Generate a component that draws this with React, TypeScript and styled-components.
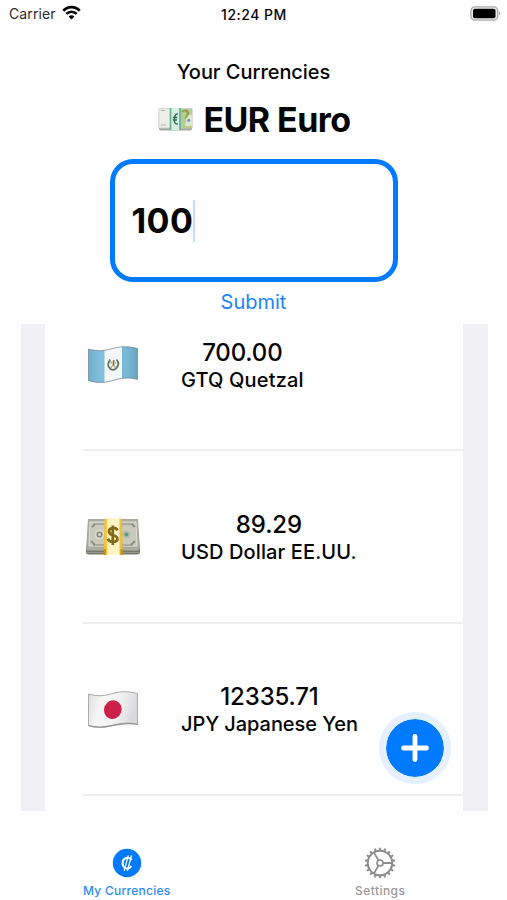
import React from "react";
import styled, { createGlobalStyle } from "styled-components";

const GlobalStyle = createGlobalStyle`
  * { box-sizing: border-box; }
  body { margin: 0; background: #fff; }
`;

const BLUE = "#007aff";

const Screen = styled.div`
  width: 507px;
  height: 900px;
  display: flex;
  flex-direction: column;
  align-items: center;
  overflow: hidden;
  background: #fefefe;
  color: #050505;
  font-family: Inter, "Liberation Sans", sans-serif;
  white-space: nowrap;
`;

const StatusBar = styled.div`
  width: 100%;
  height: 28px;
  padding: 0 6px 0 9px;
  display: grid;
  grid-template-columns: 1fr auto 1fr;
  align-items: center;
`;

const Carrier = styled.div`
  display: flex;
  align-items: center;
  gap: 6px;
  font-size: 14px;
  letter-spacing: 0.1px;
  line-height: 28px;
  color: #2a2a2a;
  svg { margin-top: -3px; }
`;

const Clock = styled.div`
  margin-right: 2px;
  font-size: 14px;
  font-weight: 550;
  letter-spacing: 0.5px;
`;

const BatterySlot = styled.div`
  display: flex;
  justify-content: flex-end;
  margin-top: -2px;
`;

const Title = styled.h1`
  margin: 30px 0 0;
  height: 28px;
  line-height: 28px;
  font-size: 20px;
  font-weight: 550;
  letter-spacing: -0.05px;
`;

const Base = styled.div`
  display: flex;
  align-items: center;
  gap: 10px;
  margin: 12px 0 0 2px;
  height: 42px;
  font-size: 34px;
  font-weight: 700;
  letter-spacing: -0.55px;
`;

const AmountField = styled.div`
  width: 288px;
  height: 123px;
  margin: 19px 0 0 0;
  padding: 0 17px;
  display: flex;
  align-items: center;
  border: 5px solid ${BLUE};
  border-radius: 23px;
  font-size: 34px;
  font-weight: 700;
  letter-spacing: 0.4px;
`;

const Caret = styled.span`
  width: 2px;
  height: 42px;
  background: #c4dcf8;
`;

const Submit = styled.button`
  margin: 5px 0 0;
  padding: 0;
  height: 30px;
  border: 0;
  background: none;
  color: #1c86f5;
  font: 400 20px/30px Inter, sans-serif;
`;

const List = styled.div`
  position: relative;
  width: 467px;
  height: 487px;
  margin: 7px 0 0 2px;
  padding-left: 38px;
  border: solid #f0f0f5;
  border-width: 0 25px 0 24px;
  overflow: hidden;
`;

const Rows = styled.div`
  margin-top: -45px;
`;

const Row = styled.div`
  height: 172.3px;
  padding-top: 2px;
  display: flex;
  align-items: center;
  border-bottom: 2px solid #eeeeef;
`;

const FlagSlot = styled.div`
  width: 98px;
  height: 44px;
  flex: none;
`;

const Details = styled.div`
  display: flex;
  flex-direction: column;
  align-items: center;
`;

const Value = styled.div`
  height: 29px;
  line-height: 29px;
  font-size: 24px;
  font-weight: 550;
  letter-spacing: -0.15px;
`;

const Name = styled.div<{ $tracking: number }>`
  height: 26px;
  line-height: 26px;
  font-size: 20px;
  font-weight: 550;
  letter-spacing: ${(p) => p.$tracking}px;
`;

const AddButton = styled.button`
  position: absolute;
  right: 12px;
  bottom: 27px;
  width: 72px;
  height: 72px;
  padding: 0;
  border: 7px solid #e4f0fd;
  border-radius: 50%;
  background: ${BLUE};
  background-clip: padding-box;
  display: grid;
  place-items: center;
`;

const TabBar = styled.nav`
  width: 100%;
  flex: 1;
  display: grid;
  grid-template-columns: 1fr 1fr;
  padding-top: 36px;
`;

const Tab = styled.div<{ $active?: boolean }>`
  display: flex;
  flex-direction: column;
  align-items: center;
  color: ${(p) => (p.$active ? "#2c8df5" : "#999")};
  font-size: 12px;
  line-height: 16px;
  font-weight: 500;
  letter-spacing: ${(p) => (p.$active ? 0.25 : 0.45)}px;
`;

const TabIcon = styled.span`
  height: 36px;
  display: flex;
  align-items: center;
  padding-bottom: 4px;
`;

const Wifi = () => (
  <svg width="19" height="15" viewBox="0 0 19 15" fill="none" stroke="#050505" strokeWidth="2.7">
    <path d="M1.3 5.7C6 0.8 13 0.8 17.7 5.7" />
    <path d="M4.3 8.9C7.3 6 11.7 6 14.7 8.9" />
    <path d="M9.5 14.5L6.6 11.4Q9.5 9 12.4 11.4Z" fill="#050505" stroke="none" />
  </svg>
);

const Battery = () => (
  <svg width="31" height="15" viewBox="0 0 31 15">
    <rect x="0.9" y="0.9" width="26.8" height="13.2" rx="4" fill="#eee" stroke="#aaa" strokeWidth="1.3" />
    <rect x="3" y="2.8" width="22.5" height="9.4" rx="1.8" fill="#000" />
    <path d="M29 5.4Q31.5 7.5 29 9.6Z" fill="#aaa" />
  </svg>
);

const EuroNotes = () => (
  <svg width="35" height="24" viewBox="0 0 35 24">
    <path d="M1 19H34V22Q34 23.5 32 23.5H3Q1 23.5 1 22Z" fill="#a7aaa5" />
    <rect x="0.8" y="1.5" width="33.4" height="19.5" rx="1" fill="#eceee9" stroke="#c8cac5" strokeWidth="0.8" />
    <path d="M2.5 3.5H7M3 18H8" stroke="#b2b5b0" strokeWidth="1" />
    <path d="M21 2H34V21H21Z" fill="#b9cb8f" />
    <path d="M29 8H34V19H27Z" fill="#dde7cb" />
    <path d="M24 5Q27 2 29 5T27 11M28 3Q31 5 30 8" fill="none" stroke="#8a9c46" strokeWidth="1.6" />
    <circle cx="30.8" cy="13.3" r="1.5" fill="#6c94c8" />
    <path d="M12 1H22V23H12Z" fill="#d9eee2" />
    <path d="M12.5 1V23M22 1V23" stroke="#64b894" strokeWidth="1.8" />
    <path d="M20 7.2Q16.8 6 16.4 12T20 16.7M14.8 10.5H19.3M14.8 13H19" fill="none" stroke="#366b53" strokeWidth="1.4" />
  </svg>
);

const FLAG = "M5.5 6C16 9 22 7.5 30 5.4S45 3 54.5 5.5V36.5C45 34 38 35 30 37.4S14 40.5 5.5 37.5Z";

const GuatemalaFlag = () => (
  <svg width="60" height="44" viewBox="0 0 60 44">
    <defs>
      <clipPath id="gtFlag"><path d={FLAG} /></clipPath>
      <linearGradient id="gtBlue" x1="0" x2="1">
        <stop offset="0" stopColor="#68a9c8" />
        <stop offset=".3" stopColor="#82bfdc" />
        <stop offset=".75" stopColor="#77b8d6" />
        <stop offset="1" stopColor="#6298b2" />
      </linearGradient>
    </defs>
    <g clipPath="url(#gtFlag)">
      <path d="M0 0H60V44H0Z" fill="url(#gtBlue)" />
      <path d="M21.5 0H39V44H21.5Z" fill="#f6f7f9" />
    </g>
    <path d={FLAG} fill="none" stroke="#65727a" strokeOpacity=".6" strokeWidth="1" />
    <path d="M27.2 16.5Q23 22 27.5 26Q30 28 33 25.5Q37.5 21 33.5 16.5" fill="none" stroke="#58745c" strokeWidth="1.7" />
    <path d="M27 18L33 25M33 19L27.5 25" stroke="#b5a884" strokeWidth="1.4" />
    <path d="M29 18Q31 15 32 18L31 22H29Z" fill="#ddd5ae" />
    <path d="M30.8 17L30.3 22" stroke="#496c47" strokeWidth="1" />
  </svg>
);

const JapanFlag = () => (
  <svg width="60" height="44" viewBox="0 0 60 44">
    <defs>
      <linearGradient id="jpWhite" x1="0" x2="1" y2=".2">
        <stop offset="0" stopColor="#dcdcde" />
        <stop offset=".3" stopColor="#f6f6f7" />
        <stop offset=".65" stopColor="#f3f3f4" />
        <stop offset="1" stopColor="#dadadc" />
      </linearGradient>
    </defs>
    <path d={FLAG} fill="url(#jpWhite)" stroke="#aaa" strokeWidth="1" />
    <path d="M5.5 37.5Q15 40.5 30 37.4T54.5 36.5" fill="none" stroke="#929294" strokeWidth="1.2" />
    <ellipse cx="29.8" cy="21.6" rx="8.8" ry="9.5" transform="rotate(20 29.8 21.6)" fill="#cc2049" />
  </svg>
);

const DollarNotes = () => (
  <svg width="60" height="44" viewBox="0 0 60 44">
    <defs>
      <linearGradient id="usBand" x1="0" x2="1">
        <stop offset="0" stopColor="#f4bb26" />
        <stop offset=".16" stopColor="#f9ca3e" />
        <stop offset=".2" stopColor="#fff3bf" />
        <stop offset=".8" stopColor="#fff5ce" />
        <stop offset=".86" stopColor="#f5c43a" />
        <stop offset="1" stopColor="#eab522" />
      </linearGradient>
    </defs>
    <path d="M3 30H57V37Q57 39.5 54 39.5H6Q3 39.5 3 37Z" fill="#77796f" />
    <path d="M3.5 35.5H56M3.5 37.5H56" stroke="#a4a69c" strokeWidth=".7" />
    <path d="M5 4H55L57 33Q57 35 55 35H5Q3 35 3 33Z" fill="#a9ac9f" />
    <path d="M7 7H53L54 31H6Z" fill="#c9cabd" stroke="#e0e0d5" strokeWidth="1" />
    <path d="M11 9H21M39 9H49M10 30H21M39 30H50" stroke="#85897d" strokeWidth="1" />
    <path d="M9 12L12 9M49 9L52 12M8 26L12 30M48 30L52 26" stroke="#8b8e81" strokeWidth="2" />
    <circle cx="16.5" cy="19.5" r="5" fill="#dad9cd" />
    <circle cx="16.5" cy="19.5" r="2.3" fill="none" stroke="#7e8278" strokeWidth="1.5" />
    <circle cx="43.5" cy="19.5" r="4" fill="#b5beac" />
    <circle cx="43.5" cy="19.5" r="2" fill="#5d9c7d" />
    <path d="M21.5 4Q30 2 39 4L39.5 38Q39 40 37 40H23Q21 40 21 38Z" fill="url(#usBand)" />
    <path d="M22 34V40M38.5 34V40" stroke="#c58d12" strokeWidth="1.8" />
    <path d="M34.5 15.5Q33 12.5 29.7 13C24.5 13.8 25 19 30 20.2C36 21.7 36 26.7 30 27Q26 27 24.8 23.8M29.8 10.5V30" fill="none" stroke="#806a18" strokeWidth="2.7" />
  </svg>
);

const Plus = () => (
  <svg width="30" height="30" viewBox="0 0 30 30" stroke="#fff" strokeWidth="4.8" strokeLinecap="round">
    <path d="M15 3.5V26.5M3.5 15H26.5" />
  </svg>
);

const ColonCoin = () => (
  <svg width="30" height="30" viewBox="0 0 30 30">
    <circle cx="15" cy="15" r="14.2" fill={BLUE} />
    <path d="M19.7 12Q18.3 9.6 15.4 9.8C11.5 10 10.4 13 10.6 15.7C10.8 19.2 13.1 20.9 15.8 20.4Q18.2 20 19.3 18" fill="none" stroke="#fff" strokeWidth="2.1" />
    <path d="M16.3 7.3L12.2 22.8M19.5 7.3L15.4 22.8" stroke="#fff" strokeWidth="1.3" />
  </svg>
);

const teeth = Array.from({ length: 18 }, (_, i) => i * 20);

const Gear = () => (
  <svg width="32" height="32" viewBox="0 0 32 32" fill="none" stroke="#8d8d8f">
    <circle cx="16" cy="16" r="12.2" strokeWidth="2" />
    {teeth.map((a) => (
      <path key={a} d="M14.9 3.6L15.3 0.9H16.7L17.1 3.6Z" transform={`rotate(${a} 16 16)`} fill="#8d8d8f" strokeWidth=".4" />
    ))}
    <circle cx="16" cy="16" r="3" strokeWidth="1.7" />
    <path d="M19 16H28M14.5 13.4L10 5.6M14.5 18.6L10 26.4" strokeWidth="1.8" />
  </svg>
);

const currencies = [
  { value: "700.00", name: "GTQ Quetzal", tracking: 0.15, Flag: GuatemalaFlag },
  { value: "89.29", name: "USD Dollar EE.UU.", tracking: 0.12, Flag: DollarNotes },
  { value: "12335.71", name: "JPY Japanese Yen", tracking: -0.06, Flag: JapanFlag },
];

export default function App() {
  return (
    <Screen>
      <GlobalStyle />
      <StatusBar>
        <Carrier>Carrier <Wifi /></Carrier>
        <Clock>12:24 PM</Clock>
        <BatterySlot><Battery /></BatterySlot>
      </StatusBar>
      <Title>Your Currencies</Title>
      <Base><EuroNotes />EUR Euro</Base>
      <AmountField>100<Caret /></AmountField>
      <Submit>Submit</Submit>
      <List>
        <Rows>
          {currencies.map(({ value, name, tracking, Flag }) => (
            <Row key={name}>
              <FlagSlot><Flag /></FlagSlot>
              <Details>
                <Value>{value}</Value>
                <Name $tracking={tracking}>{name}</Name>
              </Details>
            </Row>
          ))}
        </Rows>
        <AddButton aria-label="Add currency"><Plus /></AddButton>
      </List>
      <TabBar>
        <Tab $active><TabIcon><ColonCoin /></TabIcon>My Currencies</Tab>
        <Tab><TabIcon><Gear /></TabIcon>Settings</Tab>
      </TabBar>
    </Screen>
  );
}
